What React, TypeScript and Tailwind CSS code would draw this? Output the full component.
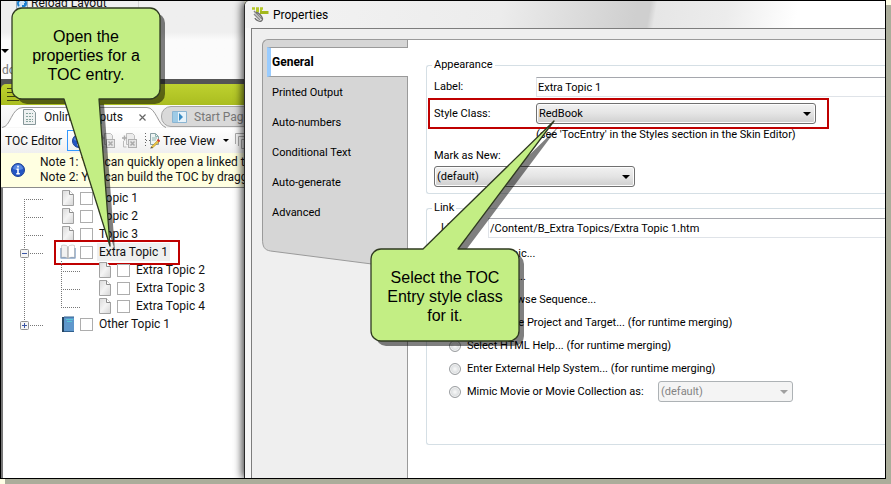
import type { ReactNode } from 'react';

const segoe = "font-[Roboto,'Noto_Sans',sans-serif] text-[12px] leading-[18px]";
const tahoma = "font-[Roboto,'Noto_Sans',sans-serif] text-[11px] leading-[16px]";

function PageIcon() {
  return (
    <svg width="14" height="16" viewBox="0 0 14 16" className="shrink-0" aria-hidden="true">
      <defs>
        <linearGradient id="pg" x1="0" y1="0" x2="1" y2="1">
          <stop offset="0" stopColor="#d9d9d9" />
          <stop offset="0.5" stopColor="#f4f4f4" />
          <stop offset="1" stopColor="#d4d4d4" />
        </linearGradient>
      </defs>
      <path d="M1.5.5h7l4 4v11h-11z" fill="url(#pg)" stroke="#a2a2a2" />
      <path d="M8.5.5v4h4" fill="#fff" stroke="#8d8d8d" />
    </svg>
  );
}

function OpenBookIcon() {
  return (
    <svg width="16" height="16" viewBox="0 0 16 16" className="-ml-px -mr-px shrink-0" aria-hidden="true">
      <path d="M.5 4v10.500h15V4z" fill="#4f79ad" />
      <path d="M1.500 1.500c2-.8 5.500-.5 6.500 1.500v11.500c-1.500-1.500-4.500-1.500-6.500-1z" fill="#f1f1f1" stroke="#b5b5b5" strokeWidth=".6" />
      <path d="M14.500 1.500c-2-.8-5.500-.5-6.500 1.500v11.500c1.500-1.500 4.500-1.500 6.500-1z" fill="#fff" stroke="#b5b5b5" strokeWidth=".6" />
      <path d="M8 3v11.500" stroke="#aaa" />
    </svg>
  );
}

function ClosedBookIcon() {
  return (
    <svg width="14" height="16" viewBox="0 0 14 16" className="shrink-0" aria-hidden="true">
      <path d="M1 1h12v15H1z" fill="#5f97cc" />
      <path d="M1 1h2v15H1z" fill="#25435f" />
      <path d="M3 1h10M3 15.500h10" stroke="#2f5f8d" />
      <path d="M5 3.500h7M6 5.500h5" stroke="#58c7d6" />
    </svg>
  );
}

type LineProps = { up?: boolean; down?: boolean; sign?: '+' | '-' };

function Branch({ up, down, sign }: LineProps) {
  return (
    <svg width="24" height="18" viewBox="0 0 24 18" className="shrink-0" aria-hidden="true">
      <g stroke="#777" strokeDasharray="1 1">
        {up && <path d="M4.500 0v10" />}
        {down && <path d="M4.500 10v8" />}
        <path d="M4 10.500h19" />
      </g>
      {sign && (
        <>
          <rect x=".5" y="6.500" width="8" height="8" rx="1" fill="#f5f5f5" stroke="#919191" />
          <path d={sign === '+' ? 'M2 10.500h5M4.500 8v5' : 'M2 10.500h5'} stroke="#3b56a5" />
        </>
      )}
    </svg>
  );
}

type NodeProps = {
  label: string;
  icon: ReactNode;
  line: LineProps;
  nested?: boolean;
  current?: boolean;
};

function TreeNode({ label, icon, line, nested, current }: NodeProps) {
  return (
    <div className="relative flex h-[18px] items-center">
      {nested && (
        <svg width="37" height="18" viewBox="0 0 37 18" className="shrink-0" aria-hidden="true">
          <path d="M4.500 0v18" stroke="#777" strokeDasharray="1 1" />
        </svg>
      )}
      {line.sign ? (
        <button type="button" aria-label={line.sign === '+' ? 'Expand' : 'Collapse'} className="block shrink-0">
          <Branch {...line} />
        </button>
      ) : (
        <Branch {...line} />
      )}
      <label className="ml-[17px] flex h-[18px] items-center whitespace-nowrap">
        {icon}
        <input
          type="checkbox"
          className="ml-[5px] mt-px size-[13px] shrink-0 appearance-none border border-[#adadad] bg-white"
        />
        <span className={current ? 'ml-1 bg-[#efefef] px-0.5' : 'ml-1.5'}>{label}</span>
      </label>
      {current && <span className="absolute -top-[3px] left-[34px] h-[25px] w-[126px] border-2 border-[#bf0000]" />}
    </div>
  );
}

function InfoIcon() {
  return (
    <svg width="14" height="14" viewBox="0 0 14 14" className="shrink-0" aria-hidden="true">
      <circle cx="7" cy="7" r="6.500" fill="#2456c4" stroke="#1c3f94" />
      <path d="M2 6a5 4.500 0 0 1 10 0c-3 1.500-7 1.500-10 0z" fill="#6f9cec" opacity=".7" />
      <path d="M7 2.800v1.800M5.500 6.200H7v4.500M5.300 10.700h3.500" stroke="#fff" strokeWidth="1.600" fill="none" />
    </svg>
  );
}

function StackIcon() {
  return (
    <svg width="17" height="17" viewBox="0 0 17 17" className="shrink-0" aria-hidden="true">
      <path d="M5.500 1.500h6l2 2v9h-8z" fill="#ececec" stroke="#bdbdbd" />
      <path d="M1 6h5M3.500 3.500v5" stroke="#aaa" strokeWidth="1.500" />
      <rect x="7.500" y="7.500" width="8" height="8" fill="#e5e5e5" stroke="#b0b0b0" />
      <path d="m9.500 9.500 4 4m0-4-4 4" stroke="#aaa" strokeWidth="1.500" />
      <path d="M2.500 9v6h3" fill="none" stroke="#bbb" />
    </svg>
  );
}

function TreeViewIcon() {
  return (
    <svg width="15" height="17" viewBox="0 0 15 17" className="shrink-0" aria-hidden="true">
      <path d="M.5 1v15M1 8.500h4" stroke="#666" strokeDasharray="1 2" />
      <path d="M5.500 1.500h5l3 3v8h-8z" fill="#eef4f4" stroke="#8aa0a4" />
      <path d="M10.500 1.500v3h3M7 6h5M7 8h4" fill="none" stroke="#8fb3ae" />
      <path d="m6 15 7-7 1.500 1.500-7 6.500z" fill="#e9c545" stroke="#a98724" strokeWidth=".5" />
      <path d="m12.500 7.500 2 2" stroke="#d23b33" strokeWidth="2" />
      <path d="m5.500 16 2-.5" stroke="#333" />
    </svg>
  );
}

function EditorPane() {
  return (
    <section className={`flex w-[243px] shrink-0 flex-col overflow-hidden bg-white text-[#111] ${segoe}`}>
      <div className="h-[78px] overflow-hidden bg-gradient-to-b from-[#efefef] from-40% to-[#fbfbfb] to-50%">
        <div className="-mt-[7px] flex h-[33px] w-[138px] items-start border-r border-[#d4d4d4] pl-3.5">
          <svg width="14" height="16" viewBox="0 0 14 16" aria-hidden="true">
            <path d="M1.500 3.500h11v11h-11z" fill="#cfe4f7" stroke="#9ab" />
            <path d="M4 12a4 4 0 1 1 6 0m0 0V9m0 3H7" fill="none" stroke="#1c7fd0" strokeWidth="2" />
          </svg>
          <span className="ml-0.5">Reload Layout</span>
        </div>
        <div className="flex flex-col pt-[22px] text-[#777]">
          <span className="h-0 w-0 border-x-[4px] border-t-[4px] border-x-transparent border-t-black" />
          <span className="mt-2 pl-px">do</span>
        </div>
      </div>
      <div className="bg-[#555] pt-[5px]">
        <div className="h-[21px] rounded-tl-[5px] bg-gradient-to-b from-[#bed12f] to-[#aabd20] pl-1.5 pt-1">
          <svg width="12" height="13" viewBox="0 0 12 13" aria-hidden="true">
            <path d="M0 .5h12M0 4.500h12M0 8.500h12M0 12.500h12" stroke="#3e4510" />
          </svg>
        </div>
      </div>

      <div className="isolate flex h-[23px] bg-gradient-to-b from-[#fafafa] to-[#f1f1f1] pt-px" role="tablist">
        <button type="button" role="tab" className="relative z-10 flex h-[22px] w-[160px] shrink-0 items-center">
          <svg width="166" height="22" viewBox="0 0 166 22" className="absolute left-0 top-0" aria-hidden="true">
            <path d="M1 21.500C10 21 10 1.500 22 1.500H146c9 0 11 18 19 20" fill="#fff" stroke="#9a9a9a" />
          </svg>
          <svg width="13" height="16" viewBox="0 0 13 16" className="relative ml-[22px]" aria-hidden="true">
            <path d="M.5.5h9l3 3v12H.5z" fill="#eef1f1" stroke="#87979a" />
            <path d="M3 4.500h7M3 7.500h7M3 10.500h7M3 12.500h7" stroke="#86a39d" strokeDasharray="2 1" />
          </svg>
          <span className="relative ml-2">Online Outputs</span>
          <svg width="7" height="7" viewBox="0 0 7 7" className="absolute left-[138px] top-2" aria-hidden="true">
            <path d="m.5.5 6 6m0-6-6 6" stroke="#666" strokeWidth="1.200" />
          </svg>
        </button>
        <button
          type="button"
          role="tab"
          className="flex h-[21px] w-[120px] shrink-0 items-center rounded-l-[10px] border border-[#a5a5a5] bg-[#d9d9d9] pl-2.5 text-[#777]"
        >
          <svg width="15" height="12" viewBox="0 0 15 12" aria-hidden="true">
            <path d="M.5.500h14v11H.5z" fill="#e8f3fa" stroke="#8bb5d2" />
            <path d="M1 1h5v10H1z" fill="#9ecbe6" />
            <path d="m7 2 4 4-4 4z" fill="#3a8cc4" />
          </svg>
          <span className="ml-[7px] whitespace-nowrap">Start Page</span>
        </button>
      </div>

      <div className="flex h-[25px] items-center bg-gradient-to-b from-white to-[#efefef] pl-1 whitespace-nowrap">
        <span className="w-[62px] shrink-0">TOC Editor</span>
        <button type="button" aria-label="Notes" className="flex h-[21px] w-[24px] shrink-0 items-center border border-[#3399ff] pl-1">
          <InfoIcon />
        </button>
        <span className="ml-2 flex gap-[5px]">
          <StackIcon />
          <StackIcon />
        </span>
        <button type="button" className="ml-[7px] flex items-center">
          <TreeViewIcon />
          <span className="ml-[3px] w-[60px] shrink-0 text-left">Tree View</span>
          <span className="h-0 w-0 border-x-[3px] border-t-[3px] border-x-transparent border-t-black" />
        </button>
        <svg width="16" height="16" viewBox="0 0 16 16" className="ml-1.5 shrink-0" aria-hidden="true">
          <path d="M.5 11V.5H11M3.500 13V3.500H14M6.500 6.500h9v9h-9z" fill="none" stroke="#aaa" />
        </svg>
      </div>

      <div className="flex h-[35px] items-center gap-[15px] whitespace-nowrap border-b border-[#8c8c8c] bg-[#ffffe1] pl-2.5">
        <InfoIcon />
        <p className="leading-[15px]">
          Note 1: You can quickly open a linked topic
          <br />
          Note 2: You can build the TOC by dragging
        </p>
      </div>

      <div className="flex-1 border-l-2 border-[#777] pl-[17px] pt-px">
        <TreeNode label="Topic 1" icon={<PageIcon />} line={{ down: true }} />
        <TreeNode label="Topic 2" icon={<PageIcon />} line={{ up: true, down: true }} />
        <TreeNode label="Topic 3" icon={<PageIcon />} line={{ up: true, down: true }} />
        <TreeNode label="Extra Topic 1" icon={<OpenBookIcon />} line={{ up: true, down: true, sign: '-' }} current />
        <TreeNode label="Extra Topic 2" icon={<PageIcon />} line={{ up: true, down: true }} nested />
        <TreeNode label="Extra Topic 3" icon={<PageIcon />} line={{ up: true, down: true }} nested />
        <TreeNode label="Extra Topic 4" icon={<PageIcon />} line={{ up: true }} nested />
        <TreeNode label="Other Topic 1" icon={<ClosedBookIcon />} line={{ up: true, sign: '+' }} />
      </div>
    </section>
  );
}

function Picker({ id, value, width, disabled }: { id: string; value: string; width: string; disabled?: boolean }) {
  return (
    <span className={`relative block h-[21px] shrink-0 ${width}`}>
      <select
        id={id}
        disabled={disabled}
        className={`block h-full w-full appearance-none rounded-[3px] border pl-0.5 outline-none ${
          disabled
            ? 'border-[#adb2b5] bg-[#f4f4f4] text-[#838383] opacity-100'
            : 'border-[#707070] bg-linear-to-b from-[#f2f2f2] via-[#e4e4e4] to-[#cfcfcf] text-black shadow-[inset_0_0_0_1px_#fcfcfc]'
        }`}
      >
        <option>{value}</option>
      </select>
      <span
        className={`pointer-events-none absolute right-[5px] top-[9px] h-0 w-0 border-x-[4px] border-t-[4px] border-x-transparent ${
          disabled ? 'border-t-[#a0a0a0]' : 'border-t-black'
        }`}
      />
    </span>
  );
}

const linkTypes = [
  'Select Topic...',
  'Select File...',
  'Select Browse Sequence...',
  'Select Flare Project and Target... (for runtime merging)',
  'Select HTML Help... (for runtime merging)',
  'Enter External Help System... (for runtime merging)',
  'Mimic Movie or Movie Collection as:',
];

const pages = ['Printed Output', 'Auto-numbers', 'Conditional Text', 'Auto-generate', 'Advanced'];

const group = 'rounded-l-[3px] border-y border-l border-[#d5dfe5]';
const textBox = 'h-[20px] min-w-0 flex-1 border-y border-l border-[#dfe3e8] border-t-[#a5a7ad] bg-white pl-px outline-none';

function PropertiesDialog() {
  return (
    <section
      className={`relative flex min-w-0 flex-1 flex-col overflow-visible rounded-tl-[5px] border-l border-[#2b2b2b] bg-[#f7f7f7] pl-1.5 text-black shadow-[-2px_0_9px_rgba(0,0,0,0.75)] ${tahoma}`}
    >
      <header className="-ml-1.5 flex h-[27px] items-center rounded-tl-[5px] bg-[linear-gradient(100deg,#f3f3f3_0%,#ececec_40%,#cfcfcf_61%,#cfcfcf_63%,#e6e6e6_64%,#ececec_75%,#ffffff_86%)] pl-[7px]">
        <svg width="17" height="17" viewBox="0 0 17 17" aria-hidden="true">
          <path d="M0 2.500h12M4 5h6" stroke="#b5c827" strokeWidth="2.500" strokeDasharray="3 1" />
          <path d="M8 6.500h8.500" stroke="#a3b81c" strokeWidth="3" />
          <path d="m2 5 8 8M2 8l6 6" stroke="#8a8a8a" strokeWidth="1.500" />
          <path d="M4 6.500c3 0 6 4 6.500 6s-2 3.500-4 2.500S3 13 3 12" fill="none" stroke="#6f6f6f" strokeWidth="1.300" />
        </svg>
        <h1 className={`ml-1 ${segoe}`}>Properties</h1>
      </header>
      <div className="flex flex-1 border-l border-t border-[#7d7d7d] bg-[#efefef] pl-2.5 pt-2.5">
        <aside className="flex w-[146px] shrink-0 flex-col border-r border-[#9a9a9a]">
          <nav className="flex flex-col rounded-tl-[6px] border-l border-t border-[#9a9a9a] bg-[#d6d6d6] pb-3 pl-1 pt-[7px]">
            <button
              type="button"
              className="relative -mr-px h-[30px] border-y border-l-4 border-y-[#9a9a9a] border-l-[#99ccff] bg-white pl-px text-left text-[12px] font-bold"
            >
              General
            </button>
            {pages.map((page) => (
              <button key={page} type="button" className="h-[30px] pl-[5px] pt-0.5 text-left">
                {page}
              </button>
            ))}
          </nav>
          <svg width="145" height="31" viewBox="0 0 145 31" aria-hidden="true">
            <path d="M.5 0c0 8 2 11 8 12L145 29.500V0z" fill="#d6d6d6" />
            <path d="M.5 0c0 8 2 11 8 12L145 29.500" fill="none" stroke="#9a9a9a" />
          </svg>
        </aside>

        <form className="min-w-0 flex-1 border-t border-[#9a9a9a] bg-white pl-[18px] pt-[17px]">
          <fieldset className={`${group} pb-1.5 pl-[7px]`}>
            <legend className="-ml-0.5 px-0.5">Appearance</legend>
            <div className="mt-1 flex items-center">
              <label htmlFor="label" className="w-[102px] shrink-0">Label:</label>
              <input id="label" defaultValue="Extra Topic 1" className={textBox} />
            </div>
            <div className="relative mt-1.5 flex w-fit items-center">
              <label htmlFor="style" className="w-[102px] shrink-0">Style Class:</label>
              <Picker id="style" value="RedBook" width="w-[280px]" />
              <span className="pointer-events-none absolute -inset-y-[5px] -left-1.5 -right-[13px] border-2 border-[#bf0000]" />
            </div>
            <p className="mt-[3px] pl-[102px]">(see 'TocEntry' in the Styles section in the Skin Editor)</p>
            <label htmlFor="mark" className="mb-0.5 mt-[5px] block">Mark as New:</label>
            <Picker id="mark" value="(default)" width="w-[201px]" />
          </fieldset>

          <fieldset className={`${group} mt-1.5 pb-[41px] pl-3.5`}>
            <legend className="-ml-[9px] px-0.5">Link</legend>
            <div className="mt-0.5 flex items-center">
              <label htmlFor="link" className="w-[47px] shrink-0">Link:</label>
              <input id="link" defaultValue="/Content/B_Extra Topics/Extra Topic 1.htm" className={textBox} />
            </div>
            <div className="mt-1 pl-2">
              {linkTypes.map((type, i) => (
                <div key={type} className="flex h-[23px] items-center">
                  <input
                    type="radio"
                    name="linkType"
                    id={`type-${i}`}
                    className="size-3 shrink-0 appearance-none rounded-full border border-[#9b9ea1] bg-radial from-[#fafafa] to-[#c3c8cb] shadow-[inset_0_0_0_1px_#f4f4f4]"
                  />
                  <label htmlFor={`type-${i}`} className="ml-1.5 min-w-[191px] whitespace-nowrap">{type}</label>
                  {i === 6 && <Picker id="collection" value="(default)" width="w-[135px]" disabled />}
                </div>
              ))}
            </div>
          </fieldset>
        </form>
      </div>
    </section>
  );
}

function Callout({ shape, place, children }: { shape: string; place: string; children: ReactNode }) {
  return (
    <>
      <svg width="885" height="478" viewBox="0 0 885 478" className="pointer-events-none absolute left-0 top-0" aria-hidden="true">
        <path d={shape} transform="translate(5 5)" fill="#000" opacity=".5" />
        <path d={shape} fill="#c3ee84" stroke="#2f3a20" strokeWidth="1.300" strokeLinejoin="round" />
      </svg>
      <p
        className={`absolute flex h-[91px] w-[148px] items-center justify-center text-center font-['Liberation_Sans',Arial,sans-serif] text-[16px] leading-[19px] text-black ${place}`}
      >
        {children}
      </p>
    </>
  );
}

export default function App() {
  return (
    <main className="flex min-h-screen bg-[#ffffe6] pb-[5px] pr-[5px]">
      <div className="relative flex min-w-0 flex-1 border border-black shadow-[5px_5px_0_#abad9b]">
        <div className="flex min-w-0 flex-1 overflow-hidden">
          <EditorPane />
          <PropertiesDialog />
        </div>
        <Callout
          place="left-[11px] top-[9px]"
          shape="M21 7H149a10 10 0 0 1 10 10V88a10 10 0 0 1-10 10H98L109 245L63 98H21a10 10 0 0 1-10-10V17a10 10 0 0 1 10-10z"
        >
          Open the
          <br />
          properties for a
          <br />
          TOC entry.
        </Callout>
        <Callout
          place="left-[370px] top-[250px]"
          shape="M380 248H422L553 120L457 248H508a10 10 0 0 1 10 10V330a10 10 0 0 1-10 10H380a10 10 0 0 1-10-10V258a10 10 0 0 1 10-10z"
        >
          Select the TOC
          <br />
          Entry style class
          <br />
          for it.
        </Callout>
      </div>
    </main>
  );
}
